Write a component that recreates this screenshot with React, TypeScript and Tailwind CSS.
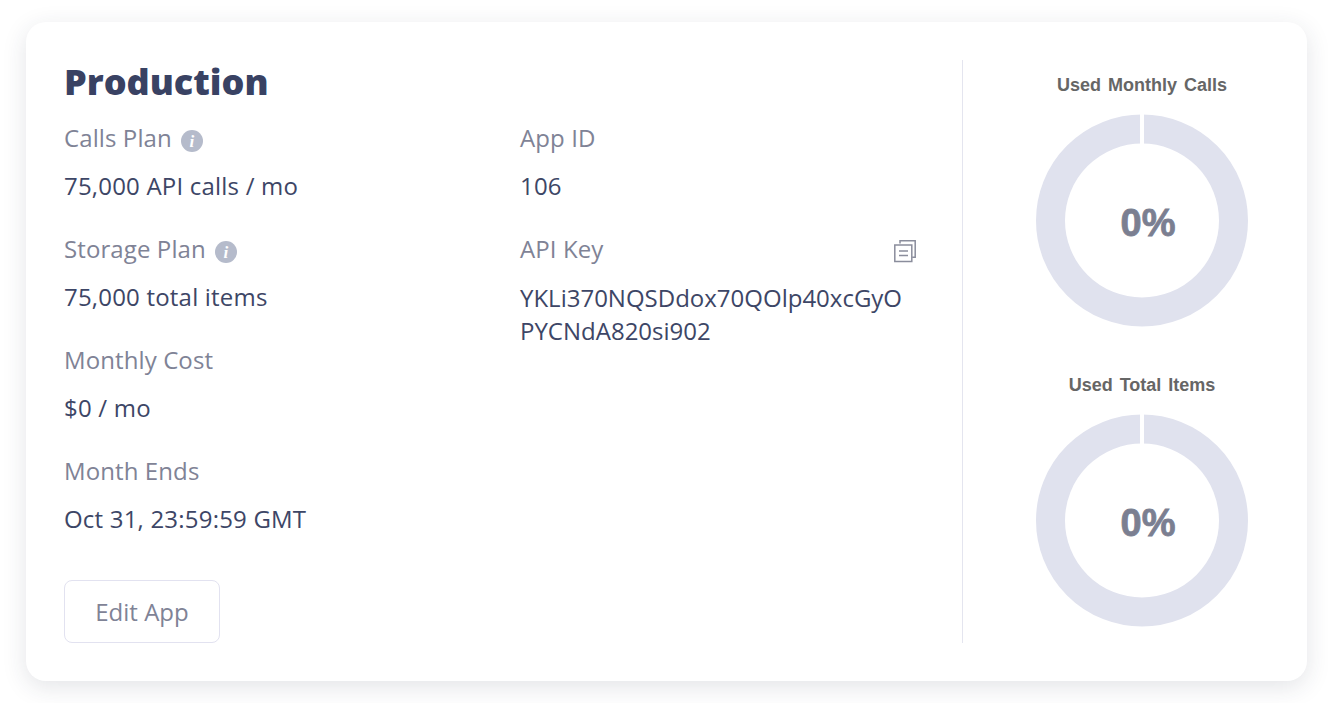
const sans = "font-['Open_Sans',sans-serif]";

function InfoIcon() {
  return (
    <span className="inline-flex mt-[6px] w-[22px] h-[22px] rounded-full bg-[#b5bbcb] items-center justify-center text-white text-[17px] font-bold italic font-['Liberation_Serif',serif] leading-none">
      i
    </span>
  );
}

function CopyIcon() {
  return (
    <svg width="24" height="24" viewBox="0 0 24 24" fill="none" stroke="#8a8d9c" strokeWidth="1.5">
      <path d="M7 4.5V1.8h15.2v16.5h-3" />
      <rect x="1.8" y="6" width="17" height="16.5" />
      <path d="M6 12h9M6 16.5h9" />
    </svg>
  );
}

function Field({ label, info, children }: { label: string; info?: boolean; children: React.ReactNode }) {
  return (
    <div className="h-[111px]">
      <div className="flex items-center gap-[9px] h-[32px] text-[24px] tracking-[0.1px] text-[#7f8396]">
        {label}
        {info && <InfoIcon />}
      </div>
      <div className="mt-[16px] text-[24px] leading-[32px] tracking-[0.2px] text-[#3d4666]">{children}</div>
    </div>
  );
}

function Donut({ title }: { title: string }) {
  return (
    <div className="flex flex-col items-center">
      <div className="h-[24px] text-[18px] leading-[24px] font-bold text-[#666666] [word-spacing:2px] font-['Liberation_Sans',sans-serif]">
        {title}
      </div>
      <div className="relative mt-[17px] w-[213px] h-[213px]">
        <svg width="213" height="213" viewBox="0 0 213 213">
          <circle cx="106" cy="106.5" r="91.5" fill="none" stroke="#e0e2ee" strokeWidth="29" />
          <rect x="104" y="0" width="4" height="30" fill="#ffffff" />
        </svg>
        <div className="absolute inset-0 flex items-center justify-center pl-[12px] pt-[6px] text-[38px] font-bold text-[#7b7f91] [-webkit-text-stroke:0.8px_#7b7f91] font-['Liberation_Sans',sans-serif]">
          0%
        </div>
      </div>
    </div>
  );
}

export default function App() {
  return (
    <div className={`w-[1328px] h-[703px] overflow-hidden bg-white pt-[22px] pl-[26px] ${sans}`}>
      <div className="w-[1281px] h-[659px] rounded-[20px] bg-white shadow-[0_6px_24px_rgba(40,44,70,0.13)] pt-[38px] pl-[38px] flex">
        <div className="w-[456px] flex flex-col h-[583px]">
          <h1 className="h-[44px] text-[36px] leading-[44px] font-extrabold text-[#394263]">Production</h1>
          <div className="mt-[18px]">
            <Field label="Calls Plan" info>75,000 API calls / mo</Field>
            <Field label="Storage Plan" info>75,000 total items</Field>
            <Field label="Monthly Cost">$0 / mo</Field>
            <Field label="Month Ends">Oct 31, 23:59:59 GMT</Field>
          </div>
          <button className="mt-auto w-[156px] h-[63px] rounded-[8px] border border-[#e2e2f0] text-[24px] text-[#7f8396]">
            Edit App
          </button>
        </div>
        <div className="w-[397px] pt-[62px]">
          <Field label="App ID">106</Field>
          <div className="relative">
            <Field label="API Key">
              <span className="block w-[390px] break-all leading-[33px] tracking-normal">
                YKLi370NQSDdox70QOlp40xcGyOPYCNdA820si902
              </span>
            </Field>
            <div className="absolute right-0 top-[6px]">
              <CopyIcon />
            </div>
          </div>
        </div>
        <div className="ml-[45px] w-px h-[583px] bg-[#e4e5ef]" />
        <div className="flex-1 pl-[14px] pt-[13px] flex flex-col gap-[46px]">
          <Donut title="Used Monthly Calls" />
          <Donut title="Used Total Items" />
        </div>
      </div>
    </div>
  );
}
